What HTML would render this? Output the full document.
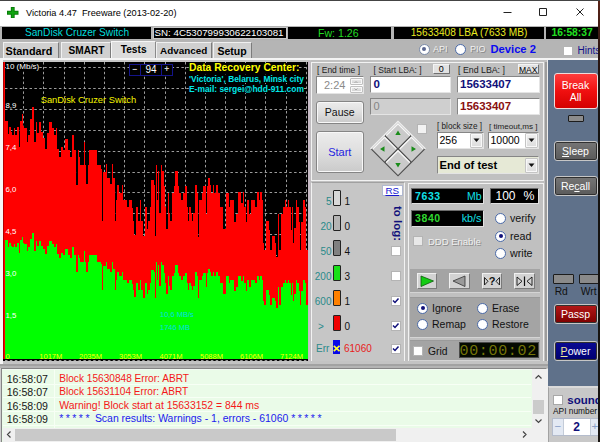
<!DOCTYPE html>
<html>
<head>
<meta charset="utf-8">
<title>Victoria 4.47</title>
<style>
html,body{margin:0;padding:0;}
body{width:600px;height:442px;overflow:hidden;position:relative;background:#bdbdbd;font-family:"Liberation Sans",sans-serif;font-size:10px;color:#000;}
.a{position:absolute;white-space:nowrap;box-sizing:border-box;}
.t{position:absolute;white-space:pre;line-height:1;}
.blk{background:#000;}
.pnl{position:absolute;box-sizing:border-box;background:#c0c0c0;border:1.200px solid #f2f2f2;}
.btn{position:absolute;background:linear-gradient(#ececec,#e0e0e0 45%,#cacaca);border:1px solid #858585;border-radius:2px;box-sizing:border-box;text-align:center;box-shadow:inset 0 0 0 1px #f8f8f8;}
.fld{position:absolute;background:#fff;box-sizing:border-box;border:1px solid #868686;border-right-color:#e4e4e4;border-bottom-color:#e4e4e4;}
.cb{position:absolute;box-sizing:border-box;width:10px;height:10px;background:#fff;border:1px solid #b4b4b4;}
.rad{position:absolute;width:11px;height:11px;border-radius:50%;background:#fff;border:1px solid #4a6aa8;box-sizing:border-box;}
.rad.on::after{content:"";position:absolute;left:2.5px;top:2.500px;width:4px;height:4px;border-radius:50%;background:#10107a;}
.sbtn{position:absolute;box-sizing:border-box;border:1px solid #c6c6c6;border-radius:3px;box-shadow:inset 0 0 0 1px #303030;text-align:center;color:#fff;font-size:11px;line-height:1;}
.rad.dis::after{background:#5a6690;}
.emb{color:#f4f4f4;text-shadow:1px 1px 0 #8a8a8a;}
u{text-decoration:underline;}
</style>
</head>
<body>

<div class="a" style="left:0px;top:0px;width:600px;height:26px;background:#fff;"></div>
<div class="a" style="left:0px;top:0px;width:600px;height:1px;background:#444;"></div>
<svg class="a" style="left:7px;top:6.500px" width="11.500" height="11.500" viewBox="0 0 12 12"><path d="M4 0h4v4h4v4h-4v4h-4v-4h-4v-4h4z" fill="#087c08"/><path d="M5 1h2v4h4v2h-4v4h-2v-4h-4v-2h4z" fill="#10a410"/></svg>
<div class="t" style="left:26px;top:8.8px;font-size:9.2px;color:#000;">Victoria 4.47  Freeware (2013-02-20)</div>
<svg class="a" style="left:500.5px;top:5.200px" width="92" height="16" viewBox="0 0 92 16"><path d="M2.500 7.500h8M38.500 3.500h7v7h-7zM75.500 3.500l7 7M82.500 3.500l-7 7" stroke="#222" stroke-width="1" fill="none"/></svg>
<div class="a" style="left:0px;top:25.5px;width:600px;height:15.5px;background:#b4b4b4;"></div>
<div class="a" style="left:2px;top:26.6px;width:149px;height:12.5px;background:#000;"></div>
<div class="a" style="left:153px;top:26.6px;width:133.5px;height:12.5px;background:#000;"></div>
<div class="a" style="left:288px;top:26.6px;width:103px;height:12.5px;background:#000;"></div>
<div class="a" style="left:394px;top:26.6px;width:150px;height:12.5px;background:#000;"></div>
<div class="a" style="left:546px;top:26.6px;width:52px;height:12.5px;background:#000;"></div>
<div class="t" style="left:2px;top:28.4px;font-size:10.2px;color:#00dcdc;width:150px;text-align:center;">SanDisk Cruzer Switch</div>
<div class="a" style="left:153px;top:26.6px;width:133.5px;height:12.5px;border:1px solid #c8c8c8;"></div>
<div class="t" style="left:154.5px;top:28.4px;font-size:9.75px;color:#fff;">SN: 4C530799930622103081</div>
<div class="t" style="left:318px;top:28.4px;font-size:10.6px;color:#22dd22;">Fw: 1.26</div>
<div class="t" style="left:394px;top:28.4px;font-size:10.15px;color:#eaea20;width:150px;text-align:center;">15633408 LBA (7633 MB)</div>
<div class="t" style="left:551.5px;top:28.4px;font-size:10.3px;color:#20e020;font-weight:bold;">16:58:37</div>
<div class="a" style="left:0px;top:41px;width:600px;height:18px;background:#b5b5b5;"></div>
<div class="a" style="left:3px;top:42px;width:56px;height:16px;background:#d0d0d0;border:1px solid #f0f0f0;border-bottom:none;border-right:1.500px solid #7c7c7c;"></div>
<div class="t" style="left:5.5px;top:46px;font-size:10.8px;color:#000;font-weight:bold;">Standard</div>
<div class="a" style="left:61px;top:42px;width:49.5px;height:16px;background:#d0d0d0;border:1px solid #f0f0f0;border-bottom:none;border-right:1.500px solid #7c7c7c;"></div>
<div class="t" style="left:68.5px;top:46px;font-size:10.1px;color:#000;font-weight:bold;">SMART</div>
<div class="a" style="left:111px;top:40.8px;width:44.5px;height:17.5px;background:#dcdcdc;border:1px solid #f6f6f6;border-bottom:none;border-right-color:#8a8a8a;"></div>
<div class="t" style="left:120.7px;top:44.6px;font-size:10.2px;color:#000;font-weight:bold;">Tests</div>
<div class="a" style="left:156px;top:42px;width:55.5px;height:16px;background:#d0d0d0;border:1px solid #f0f0f0;border-bottom:none;border-right:1.500px solid #7c7c7c;"></div>
<div class="t" style="left:160px;top:46px;font-size:9.9px;color:#000;font-weight:bold;">Advanced</div>
<div class="a" style="left:213px;top:42px;width:38.5px;height:16px;background:#d0d0d0;border:1px solid #f0f0f0;border-bottom:none;border-right:1.500px solid #7c7c7c;"></div>
<div class="t" style="left:217.5px;top:46px;font-size:10.5px;color:#000;font-weight:bold;">Setup</div>
<div class="rad on dis" style="left:418.5px;top:43.500px;border-color:#7a8aa8;"></div>
<div class="t emb" style="left:433px;top:45px;font-size:9px;color:#f0f0f0;">API</div>
<div class="rad" style="left:454.5px;top:43.500px;"></div>
<div class="t emb" style="left:470px;top:45px;font-size:9px;color:#f0f0f0;">PIO</div>
<div class="t" style="left:490.5px;top:43.5px;font-size:11.2px;color:#0a0af0;font-weight:bold;">Device 2</div>
<div class="cb" style="left:563px;top:45.500px;"></div>
<div class="t" style="left:577.5px;top:46px;font-size:10px;color:#10108a;">Hints</div>
<div class="a" style="left:0px;top:57.8px;width:598px;height:1.8px;background:#f4f4f4;"></div>
<div class="a" style="left:0px;top:59.6px;width:598px;height:2.4px;background:#c6c6c6;"></div>
<div class="a" style="left:2.6px;top:61.5px;width:305.5px;height:299.1px;background:#000;"></div>
<svg class="a" style="left:0;top:0" width="600" height="442" viewBox="0 0 600 442"><path d="M23.5 62V359M43.5 62V359M64.5 62V359M84.5 62V359M104.5 62V359M124.5 62V359M144.5 62V359M165.5 62V359M185.5 62V359M205.5 62V359M225.5 62V359M245.5 62V359M265.5 62V359M286.5 62V359M306.5 62V359M5 67.5H308M5 88.5H308M5 109.5H308M5 130.5H308M5 151.5H308M5 172.5H308M5 192.5H308M5 213.5H308M5 234.5H308M5 255.5H308M5 276.5H308M5 297.5H308M5 318.5H308M5 339.5H308M5 360.5H308" stroke="#9c9c9c" stroke-width="1" stroke-dasharray="2.500 2.400" fill="none"/><path d="M5 358.6V121H8V134H9V127H11V132H12V135H14V128H15V135H17V127H19V147H20V121H22V114H23V126H24V128H27V142H28V135H30V119H32V107H34V142H36V122H37V133H39V122H41V132H43V138H45V149H47V133H49V122H52V128H54V135H56V128H57V149H59V157H61V147H63V150H65V139H68V150H70V157H72V135H74V150H76V185H78V150H79V157H80V165H84V142H85V165H86V184H88V165H89V150H97V165H101V169H102V221H103V172H106V164H107V178H110V184H112V164H113V178H115V221H116V200H117V185H119V193H122V185H123V200H127V207H129V200H132V208H133V221H134V235H136V207H138V221H140V200H141V221H143V236H145V207H147V229H148V221H150V207H151V180H154V185H155V236H156V165H157V200H158V171H159V213H161V165H162V171H164V186H165V207H166V229H168V193H169V213H170V221H172V193H174V186H175V171H178V186H179V193H181V200H183V193H185V186H187V207H188V221H189V207H191V213H192V221H193V213H195V185H197V193H198V237H199V200H202V193H203V186H206V214H207V186H208V178H210V185H211V193H213V185H214V193H216V185H218V193H220V207H223V229H226V193H229V207H230V200H234V222H236V214H238V192H241V203H243V192H244V207H246V222H247V200H249V214H251V200H255V207H257V192H259V200H260V192H262V200H263V243H264V250H266V221H269V230H270V250H272V236H275V243H276V257H278V214H279V250H281V214H283V207H285V200H286V207H288V200H289V207H291V230H292V207H293V243H294V228H296V200H297V207H299V222H300V250H301V222H303V200H305V207H306V250H308V358.6Z" fill="#ff0000" shape-rendering="crispEdges"/><path d="M5 358.6V240H8V246.5H9V243H11V245.5H12V247H14V243.5H15V247H17V243H19V253H20V240H22V236.5H23V242.5H24V243.5H27V250.5H28V247H30V239H32V233H34V250.5H36V240.5H37V246H39V240.5H41V245.5H43V248.5H45V254H47V246H49V240.5H52V243.5H54V247H56V243.5H57V254H59V258H61V253H63V254.5H65V249H68V254.5H70V258H72V247H74V254.5H76V272H78V254.5H79V258H80V262H84V250.5H85V262H86V271.5H88V262H89V254.5H97V262H101V264H102V290H103V265.5H106V261.5H107V268.5H110V271.5H112V261.5H113V268.5H115V290H116V279.5H117V272H119V276H122V272H123V279.5H127V283H129V279.5H132V283.5H133V290H134V297H136V283H138V290H140V279.5H141V290H143V297.5H145V283H147V294H148V290H150V283H151V269.5H154V272H155V297.5H156V262H157V279.5H158V265H159V286H161V262H162V265H164V272.5H165V283H166V294H168V276H169V286H170V290H172V276H174V272.5H175V265H178V272.5H179V276H181V279.5H183V276H185V272.5H187V283H188V290H189V283H191V286H192V290H193V286H195V272H197V276H198V298H199V279.5H202V276H203V272.5H206V286.5H207V272.5H208V268.5H210V272H211V276H213V272H214V276H216V272H218V276H220V283H223V294H226V276H229V283H230V279.5H234V290.5H236V286.5H238V275.5H241V281H243V275.5H244V283H246V290.5H247V279.5H249V286.5H251V279.5H255V283H257V275.5H259V279.5H260V275.5H262V279.5H263V301H264V304.5H266V290H269V294.5H270V304.5H272V297.5H275V301H276V308H278V286.5H279V304.5H281V286.5H283V283H285V279.5H286V283H288V279.5H289V283H291V294.5H292V283H293V301H294V293.5H296V279.5H297V283H299V290.5H300V304.5H301V290.5H303V279.5H305V283H306V304.5H308V358.6Z" fill="#00ff00" shape-rendering="crispEdges"/><path d="M4.150 62V359" stroke="#ff0000" stroke-width="1.700"/></svg>
<div class="t" style="left:5.5px;top:62.5px;font-size:8px;color:#fff;background:#000;">10 (Mb/s)</div>
<div class="t" style="left:5.5px;top:102px;font-size:7.8px;color:#fff;">8,9</div>
<div class="t" style="left:5.5px;top:143.9px;font-size:7.8px;color:#fff;">7,4</div>
<div class="t" style="left:5.5px;top:185.8px;font-size:7.8px;color:#fff;">6,0</div>
<div class="t" style="left:5.5px;top:227.7px;font-size:7.8px;color:#fff;">4,5</div>
<div class="t" style="left:5.5px;top:269.6px;font-size:7.8px;color:#fff;">3,0</div>
<div class="t" style="left:5.5px;top:311.5px;font-size:7.8px;color:#fff;">1,5</div>
<div class="t" style="left:5.6px;top:353px;font-size:7.5px;color:#ffff00;">0</div>
<div class="t" style="left:39.3px;top:353px;font-size:7.5px;color:#ffff00;">1017M</div>
<div class="t" style="left:79px;top:353px;font-size:7.5px;color:#ffff00;">2035M</div>
<div class="t" style="left:119px;top:353px;font-size:7.5px;color:#ffff00;">3053M</div>
<div class="t" style="left:159.5px;top:353px;font-size:7.5px;color:#ffff00;">4071M</div>
<div class="t" style="left:200px;top:353px;font-size:7.5px;color:#ffff00;">5088M</div>
<div class="t" style="left:240px;top:353px;font-size:7.5px;color:#ffff00;">6106M</div>
<div class="t" style="left:280px;top:353px;font-size:7.5px;color:#ffff00;">7124M</div>
<div class="t" style="left:40.7px;top:95.5px;font-size:9.35px;color:#f6f600;">SanDisk Cruzer Switch</div>
<div class="a" style="left:129px;top:63.5px;width:43.5px;height:12.2px;border:1px solid #14148a;background:#000;"></div>
<div class="a" style="left:140.3px;top:63.5px;width:1px;height:12.2px;background:#14148a;"></div>
<div class="a" style="left:160.8px;top:63.5px;width:1px;height:12.2px;background:#14148a;"></div>
<div class="t" style="left:132.5px;top:65px;font-size:8.5px;color:#d0d0d0;font-weight:bold;">−</div>
<div class="t" style="left:145.5px;top:64.8px;font-size:10px;color:#fff;">94</div>
<div class="t" style="left:164.2px;top:65px;font-size:8.5px;color:#d0d0d0;font-weight:bold;">+</div>
<div class="t" style="left:189px;top:63.3px;font-size:10.3px;color:#ffff00;font-weight:bold;background:#000;">Data Recovery Center:</div>
<div class="t" style="left:189px;top:74.7px;font-size:8.37px;color:#00e8e8;font-weight:bold;background:#000;">'Victoria', Belarus, Minsk city</div>
<div class="t" style="left:189px;top:84.6px;font-size:8.43px;color:#00e8e8;font-weight:bold;background:#000;">E-mail: sergei@hdd-911.com</div>
<div class="t" style="left:160px;top:311px;font-size:7.5px;color:#00e0e0;">10,6 MB/s</div>
<div class="t" style="left:160px;top:324px;font-size:7.5px;color:#00e0e0;">1746 MB</div>
<div class="a" style="left:308.1px;top:60.6px;width:2.6px;height:301px;background:linear-gradient(90deg,#c8b4c4,#c8c0c8 50%,#bcbcbc);"></div>
<div class="a" style="left:310.5px;top:59.5px;width:237.5px;height:303px;background:#c0c0c0;"></div>
<div class="a" style="left:544.7px;top:62px;width:2.2px;height:300px;background:#9c9c9c;"></div>
<div class="a" style="left:547px;top:59.5px;width:1px;height:327px;background:#ececec;"></div>
<div class="pnl" style="left:310.75px;top:62px;width:233.500px;height:119.250px;"></div>
<div class="t" style="left:317px;top:65.8px;font-size:8.5px;color:#222;">[ End time ]</div>
<div class="t" style="left:373.5px;top:65.8px;font-size:8.5px;color:#222;">[ Start LBA: ]</div>
<div class="t" style="left:458px;top:65.8px;font-size:8.8px;color:#222;">[ End LBA: ]</div>
<div class="btn" style="left:432.500px;top:64.300px;width:17.500px;height:10px;border-radius:1px;border-color:#f4f4f4 #707070 #707070 #f4f4f4;background:#e2e2e2;box-shadow:none;"></div>
<div class="t" style="left:432.5px;top:65.3px;font-size:9px;color:#000;width:17.5px;text-align:center;">0</div>
<div class="btn" style="left:517.700px;top:64.300px;width:21px;height:10px;border-radius:1px;border-color:#f4f4f4 #707070 #707070 #f4f4f4;background:#e2e2e2;box-shadow:none;"></div>
<div class="t" style="left:517.7px;top:65.5px;font-size:8.6px;color:#000;width:21px;text-align:center;">MAX</div>
<div class="fld" style="left:315.700px;top:76.200px;width:48px;height:17.500px;"></div>
<div class="t" style="left:324px;top:80px;font-size:11px;color:#8a8a8a;">2:24</div>
<div class="btn" style="left:349.5px;top:77.700px;width:13px;height:7.300px;border-radius:1px;border-color:#c0c0c0;"></div>
<div class="btn" style="left:349.5px;top:85.700px;width:13px;height:7.300px;border-radius:1px;border-color:#c0c0c0;"></div>
<svg class="a" style="left:353px;top:80px" width="6" height="12" viewBox="0 0 6 12"><path d="M1.500 3L3 1.500L4.500 3M1.500 8.500L3 10L4.500 8.500" stroke="#999" stroke-width="0.800" fill="none"/></svg>
<div class="fld" style="left:370px;top:76.200px;width:80.500px;height:17.300px;"></div>
<div class="t" style="left:373.5px;top:78.8px;font-size:11.5px;color:#10107a;font-weight:bold;">0</div>
<div class="fld" style="left:456.5px;top:76.200px;width:83px;height:17.300px;"></div>
<div class="t" style="left:460px;top:78.8px;font-size:11.5px;color:#10107a;font-weight:bold;">15633407</div>
<div class="btn" style="left:315.700px;top:101.200px;width:48px;height:22.500px;border-radius:3px;"></div>
<div class="t" style="left:316px;top:107px;font-size:10.5px;color:#111;width:47.5px;text-align:center;">Pause</div>
<div class="fld" style="left:370px;top:98.300px;width:80.500px;height:17px;background:#cfcfcf;"></div>
<div class="t" style="left:373.5px;top:101.2px;font-size:11px;color:#858585;">0</div>
<div class="fld" style="left:456.5px;top:98.300px;width:83px;height:17px;"></div>
<div class="t" style="left:460px;top:101px;font-size:11.5px;color:#8a1010;font-weight:bold;">15633407</div>
<div class="btn" style="left:315.700px;top:130.500px;width:48px;height:42.800px;border-radius:3px;"></div>
<div class="t" style="left:316px;top:146.5px;font-size:11px;color:#2424e0;width:47.5px;text-align:center;">Start</div>
<svg class="a" style="left:368px;top:119px" width="60" height="60" viewBox="0 0 60 60">
<path d="M30 2.5L57.5 30L30 57.5L2.5 30Z" fill="#4c4c4c"/>
<path d="M2.500 30L30 2.500L57.500 30" fill="none" stroke="#f4f4f4" stroke-width="1.400"/>
<path d="M30 4.1L42.4 16.5L30 28.9L17.6 16.5Z" fill="#cacaca"/>
<path d="M18.2 16.5L30 4.699999999999999L41.8 16.5" fill="none" stroke="#f8f8f8" stroke-width="1.300"/>
<path d="M30 31.1L42.4 43.5L30 55.9L17.6 43.5Z" fill="#cacaca"/>
<path d="M18.2 43.5L30 31.7L41.8 43.5" fill="none" stroke="#f8f8f8" stroke-width="1.300"/>
<path d="M16.5 17.6L28.9 30L16.5 42.4L4.1 30Z" fill="#cacaca"/>
<path d="M4.699999999999999 30L16.5 18.2L28.3 30" fill="none" stroke="#f8f8f8" stroke-width="1.300"/>
<path d="M43.5 17.6L55.9 30L43.5 42.4L31.1 30Z" fill="#cacaca"/>
<path d="M31.7 30L43.5 18.2L55.3 30" fill="none" stroke="#f8f8f8" stroke-width="1.300"/>
<path d="M30 11.500l2.700 4.500h-5.400zM30 48.500l2.700-4.500h-5.400zM12 30l4.500-2.700v5.400zM48 30l-4.500-2.700v5.400z" fill="#1a8c1a"/>
</svg>
<div class="cb" style="left:417px;top:124px;background:#f2f2f2;"></div>
<div class="t" style="left:437px;top:122.5px;font-size:8.2px;color:#222;">[ block size ]</div>
<div class="t" style="left:489px;top:122.5px;font-size:8.1px;color:#222;">[ timeout,ms ]</div>
<div class="fld" style="left:436.5px;top:131.7px;width:47px;height:17.5px;background:#fff;"></div>
<div class="btn" style="left:470.0px;top:133.2px;width:12.500px;height:14.5px;border-radius:1px;border-color:#c4c4c4;background:linear-gradient(#f0f0f0,#dcdcdc);"></div>
<svg class="a" style="left:473.0px;top:138.45px" width="7" height="5" viewBox="0 0 7 5"><path d="M0.500 0.500h6l-3 3.500z" fill="#111"/></svg>
<div class="t" style="left:439.5px;top:134.7px;font-size:10.5px;color:#000;">256</div>
<div class="fld" style="left:487.5px;top:131.7px;width:51px;height:17.5px;background:#fff;"></div>
<div class="btn" style="left:525.0px;top:133.2px;width:12.500px;height:14.5px;border-radius:1px;border-color:#c4c4c4;background:linear-gradient(#f0f0f0,#dcdcdc);"></div>
<svg class="a" style="left:528.0px;top:138.45px" width="7" height="5" viewBox="0 0 7 5"><path d="M0.500 0.500h6l-3 3.500z" fill="#111"/></svg>
<div class="t" style="left:490.5px;top:134.7px;font-size:10.5px;color:#000;">10000</div>
<div class="fld" style="left:436.5px;top:156px;width:102px;height:18px;background:#e6e9d6;"></div>
<div class="btn" style="left:525.0px;top:157.5px;width:12.500px;height:15px;border-radius:1px;border-color:#c4c4c4;background:linear-gradient(#f0f0f0,#dcdcdc);"></div>
<svg class="a" style="left:528.0px;top:163.0px" width="7" height="5" viewBox="0 0 7 5"><path d="M0.500 0.500h6l-3 3.500z" fill="#111"/></svg>
<div class="t" style="left:439.5px;top:159.5px;font-size:11.2px;color:#000;font-weight:bold;">End of test</div>
<div class="pnl" style="left:310.75px;top:181.500px;width:94.250px;height:180.500px;border-top-color:#a0a0a0;background:#c6c6c6;"></div>
<div class="a" style="left:381.5px;top:185px;width:21.500px;height:10.500px;background:#fff;border:1px solid #b0b8d0;"></div>
<div class="t" style="left:381.5px;top:185.8px;font-size:9.8px;color:#1818d0;width:21.5px;text-align:center;"><u>RS</u></div>
<div class="a" style="left:333px;top:190px;width:8px;height:16px;background:#d8d8d8;border:1px solid #222;border-radius:1px;"></div>
<div class="t" style="left:311px;top:196.5px;font-size:10px;color:#2a8a8a;width:20.5px;text-align:right;">5</div>
<div class="t" style="left:344.5px;top:196.5px;font-size:10px;color:#111;">1</div>
<div class="a" style="left:333px;top:215px;width:8px;height:16px;background:#b4b4b4;border:1px solid #222;border-radius:1px;"></div>
<div class="t" style="left:311px;top:221.5px;font-size:10px;color:#2a8a8a;width:20.5px;text-align:right;">20</div>
<div class="t" style="left:344.5px;top:221.5px;font-size:10px;color:#111;">0</div>
<div class="a" style="left:333px;top:240px;width:8px;height:16px;background:#808080;border:1px solid #222;border-radius:1px;"></div>
<div class="t" style="left:311px;top:246.5px;font-size:10px;color:#2a8a8a;width:20.5px;text-align:right;">50</div>
<div class="t" style="left:344.5px;top:246.5px;font-size:10px;color:#111;">4</div>
<div class="a" style="left:333px;top:265px;width:8px;height:16px;background:#18e018;border:1px solid #222;border-radius:1px;"></div>
<div class="t" style="left:311px;top:271.5px;font-size:10px;color:#2a8a8a;width:20.5px;text-align:right;">200</div>
<div class="t" style="left:344.5px;top:271.5px;font-size:10px;color:#111;">3</div>
<div class="a" style="left:333px;top:290px;width:8px;height:16px;background:#ff8000;border:1px solid #222;border-radius:1px;"></div>
<div class="t" style="left:311px;top:296.5px;font-size:10px;color:#2a8a8a;width:20.5px;text-align:right;">600</div>
<div class="t" style="left:344.5px;top:296.5px;font-size:10px;color:#111;">1</div>
<div class="a" style="left:333px;top:315px;width:8px;height:16px;background:#f00000;border:1px solid #222;border-radius:1px;"></div>
<div class="t" style="left:318px;top:321.5px;font-size:10px;color:#2a8a8a;">&gt;</div>
<div class="t" style="left:344.5px;top:321.5px;font-size:10px;color:#111;">0</div>
<div class="a" style="left:332.500px;top:339.500px;width:7.300px;height:14.500px;background:#0808e8;"></div>
<svg class="a" style="left:332.500px;top:344.500px" width="7.300" height="7" viewBox="0 0 7.300 7"><path d="M0.800 0.800L6.500 6.200M6.500 0.800L0.800 6.200" stroke="#ffff30" stroke-width="1.700"/></svg>
<div class="t" style="left:316px;top:344.3px;font-size:10px;color:#2a8a8a;">Err</div>
<div class="t" style="left:344px;top:344.3px;font-size:10px;color:#e82020;">61060</div>
<div class="cb" style="left:391px;top:246.3px;"></div>
<div class="cb" style="left:391px;top:270.5px;"></div>
<div class="cb" style="left:391px;top:295.5px;"></div>
<svg class="a" style="left:392.3px;top:296.8px" width="8" height="8" viewBox="0 0 8 8"><path d="M1 3.500L3 5.500L6.500 1.500" stroke="#10107a" stroke-width="1.500" fill="none"/></svg>
<div class="cb" style="left:391px;top:320.8px;"></div>
<svg class="a" style="left:392.3px;top:322.1px" width="8" height="8" viewBox="0 0 8 8"><path d="M1 3.500L3 5.500L6.500 1.500" stroke="#10107a" stroke-width="1.500" fill="none"/></svg>
<div class="cb" style="left:391px;top:344px;"></div>
<svg class="a" style="left:392.3px;top:345.3px" width="8" height="8" viewBox="0 0 8 8"><path d="M1 3.500L3 5.500L6.500 1.500" stroke="#10107a" stroke-width="1.500" fill="none"/></svg>
<div class="t" style="left:391px;top:206px;font-size:11.500px;font-weight:bold;color:#10107a;transform-origin:0 0;transform:rotate(90deg) translate(0,-100%);">to log:</div>
<div class="pnl" style="left:408px;top:183px;width:136.250px;height:179.250px;"></div>
<div class="a" style="left:411px;top:188px;width:72.5px;height:15.5px;background:#000;border:1px solid #6a6a6a;border-right-color:#e0e0e0;border-bottom-color:#e0e0e0;"></div>
<div class="t" style="left:415px;top:190.5px;font-size:10.5px;color:#10e0e8;font-weight:bold;letter-spacing:0.600px;">7633</div>
<div class="t" style="left:411px;top:190.5px;font-size:10.5px;color:#10e0e8;width:70.5px;text-align:right;">Mb</div>
<div class="a" style="left:490px;top:188px;width:48.5px;height:15.5px;background:#000;border:1px solid #6a6a6a;border-right-color:#e0e0e0;border-bottom-color:#e0e0e0;"></div>
<div class="t" style="left:495.5px;top:189.5px;font-size:12px;color:#fff;">100</div>
<div class="t" style="left:523.5px;top:189.5px;font-size:12.3px;color:#fff;">%</div>
<div class="a" style="left:411px;top:210.3px;width:72.5px;height:16.3px;background:#000;border:1px solid #6a6a6a;border-right-color:#e0e0e0;border-bottom-color:#e0e0e0;"></div>
<div class="t" style="left:415px;top:212.8px;font-size:10.5px;color:#30d830;font-weight:bold;letter-spacing:0.600px;">3840</div>
<div class="t" style="left:411px;top:212.5px;font-size:10.8px;color:#10e0e8;width:70.5px;text-align:right;">kb/s</div>
<div class="rad" style="left:495px;top:212.5px;"></div>
<div class="t" style="left:510px;top:212.5px;font-size:10.7px;color:#111;">verify</div>
<div class="rad on" style="left:495px;top:230.5px;"></div>
<div class="t" style="left:510px;top:230.5px;font-size:10.7px;color:#111;">read</div>
<div class="rad" style="left:495px;top:248.2px;"></div>
<div class="t" style="left:510px;top:248.2px;font-size:10.7px;color:#111;">write</div>
<div class="cb" style="left:413px;top:236px;background:#e8e8e8;"></div>
<div class="t emb" style="left:428px;top:236.5px;font-size:9.5px;color:#f0f0f0;">DDD Enable</div>
<div class="a" style="left:410px;top:268.5px;width:129.5px;height:24px;background:#a4a4a4;border-bottom:1px solid #d4d4d4;"></div>
<div class="a" style="left:416.5px;top:272.500px;width:20.5px;height:16.500px;background:#d3d3d3;border:1px solid #f0f0f0;border-right-color:#7a7a7a;border-bottom-color:#7a7a7a;"></div>
<svg class="a" style="left:416.5px;top:272.500px" width="20.5" height="16.500" viewBox="0 0 20.5 16.500"><path d="M4 3L16.500 8L4 13.500Z" fill="#14cc14" stroke="#0a5a0a" stroke-width="0.800"/></svg>
<div class="a" style="left:449px;top:272.500px;width:20.5px;height:16.500px;background:#d3d3d3;border:1px solid #f0f0f0;border-right-color:#7a7a7a;border-bottom-color:#7a7a7a;"></div>
<svg class="a" style="left:449px;top:272.500px" width="20.5" height="16.500" viewBox="0 0 20.5 16.500"><path d="M16 3L4 8L16 13.500Z" fill="#9a9a9a" stroke="#333" stroke-width="0.800"/></svg>
<div class="a" style="left:482px;top:272.500px;width:20px;height:16.500px;background:#d3d3d3;border:1px solid #f0f0f0;border-right-color:#7a7a7a;border-bottom-color:#7a7a7a;"></div>
<svg class="a" style="left:482px;top:272.500px" width="20" height="16.500" viewBox="0 0 20 16.500"><path d="M2.500 4.500L6 8.250L2.500 12Z M17.500 4.500L14 8.250L17.500 12Z" fill="none" stroke="#111" stroke-width="0.900"/><text x="10" y="12.300" font-size="11" font-weight="bold" text-anchor="middle" font-family="Liberation Sans, sans-serif" fill="#111">?</text></svg>
<div class="a" style="left:514px;top:272.500px;width:21px;height:16.500px;background:#d3d3d3;border:1px solid #f0f0f0;border-right-color:#7a7a7a;border-bottom-color:#7a7a7a;"></div>
<svg class="a" style="left:514px;top:272.500px" width="21" height="16.500" viewBox="0 0 21 16.500"><path d="M3 4L8 8.250L3 12.500Z M18 4L13 8.250L18 12.500Z" fill="none" stroke="#111" stroke-width="0.900"/><path d="M10.500 3.500V13" stroke="#111" stroke-width="1.200"/></svg>
<div class="a" style="left:410px;top:296.5px;width:129.5px;height:41px;background:#a4a4a4;border-top:1px solid #9a9a9a;border-bottom:1px solid #d4d4d4;"></div>
<div class="rad on" style="left:417px;top:302.8px;"></div>
<div class="t" style="left:432px;top:302.8px;font-size:10.5px;color:#111;">Ignore</div>
<div class="rad" style="left:477px;top:302.8px;"></div>
<div class="t" style="left:492px;top:302.8px;font-size:10.5px;color:#111;">Erase</div>
<div class="rad" style="left:417px;top:319.0px;"></div>
<div class="t" style="left:432px;top:319.0px;font-size:10.5px;color:#111;">Remap</div>
<div class="rad" style="left:477px;top:319.0px;"></div>
<div class="t" style="left:492px;top:319.0px;font-size:10.5px;color:#111;">Restore</div>
<div class="a" style="left:410px;top:340px;width:129.5px;height:20.5px;background:#a4a4a4;border-top:1px solid #9a9a9a;border-bottom:1px solid #d4d4d4;"></div>
<div class="cb" style="left:413px;top:345.500px;"></div>
<div class="t" style="left:428px;top:346.5px;font-size:10.3px;color:#111;">Grid</div>
<div class="a" style="left:459px;top:342px;width:80px;height:16px;background:#050a00;border:1px solid #4a4a4a;"></div>
<div class="t" style="left:459.500px;top:343.700px;font-family:'Liberation Mono',monospace;font-size:15px;color:#747408;letter-spacing:0.670px;">00:00:02</div>
<div class="a" style="left:548px;top:59.6px;width:50px;height:327.4px;background:#5f718a;"></div>
<div class="sbtn" style="left:553.5px;top:73px;width:44px;height:35.500px;background:linear-gradient(#ff3c3c,#f01010 50%,#d40000);border-color:#f0dada;box-shadow:none;border-radius:3px;font-size:10.500px;line-height:12.500px;padding-top:4.500px;">Break<br>All</div>
<div class="a" style="left:567.5px;top:114.5px;width:16.5px;height:7px;background:#8c8c8c;border:1px solid #1c1c1c;border-radius:1px;"></div>
<div class="sbtn" style="left:553.5px;top:140.5px;width:44px;height:20px;background:linear-gradient(#767676,#5a5a5a);font-size:10.5px;padding-top:4.25px;"><u>S</u>leep</div>
<div class="sbtn" style="left:553.5px;top:176px;width:44px;height:19.5px;background:linear-gradient(#767676,#5a5a5a);font-size:10.5px;padding-top:4.0px;">Re<u>c</u>all</div>
<div class="a" style="left:553px;top:274px;width:20.5px;height:10.3px;background:#8a8a8a;border:1px solid #1c1c1c;border-radius:1px;"></div>
<div class="a" style="left:579px;top:274px;width:20.5px;height:10.3px;background:#8a8a8a;border:1px solid #1c1c1c;border-radius:1px;"></div>
<div class="t" style="left:554.7px;top:287px;font-size:10.3px;color:#101010;">Rd</div>
<div class="t" style="left:580.7px;top:287px;font-size:10.3px;color:#101010;">Wrt</div>
<div class="sbtn" style="left:553.5px;top:304px;width:44px;height:19.8px;background:linear-gradient(#b41818,#7c0000);font-size:10.5px;padding-top:4.15px;">Passp</div>
<div class="sbtn" style="left:553.5px;top:341px;width:44px;height:19.5px;background:linear-gradient(#0a0a94,#000070);font-size:10.5px;padding-top:4.0px;"><u style="color:#f0ea98">P</u>ower</div>
<div class="a" style="left:548px;top:386px;width:50px;height:56px;background:#c8c8c8;border-top:2px solid #dadada;border-left:1.500px solid #a2a2a2;"></div>
<div class="cb" style="left:552.500px;top:394.800px;border-color:#a8a8a8;"></div>
<div class="t" style="left:567.3px;top:395px;font-size:11.5px;color:#10107a;font-weight:bold;">sound</div>
<div class="t" style="left:553px;top:406.5px;font-size:8.35px;color:#111;">API number</div>
<div class="a" style="left:552px;top:418px;width:46.5px;height:17.7px;background:#fff;border:1px solid #b4bccc;"></div>
<div class="a" style="left:552.5px;top:418.5px;width:11px;height:16.7px;background:#e3e9f3;border-right:1px solid #c4ccd8;"></div>
<div class="a" style="left:589.7px;top:418.5px;width:9px;height:16.7px;background:#e3e9f3;border-left:1px solid #c4ccd8;"></div>
<div class="t" style="left:554.5px;top:420.5px;font-size:11.5px;color:#8aa0c8;">−</div>
<div class="t" style="left:573.2px;top:420.8px;font-size:12px;color:#10107a;font-weight:bold;">2</div>
<div class="t" style="left:591.5px;top:420.5px;font-size:11.5px;color:#8aa0c8;">+</div>
<div class="a" style="left:0px;top:360.6px;width:548px;height:82px;background:#c3c3c3;"></div>
<div class="a" style="left:0px;top:364.2px;width:548px;height:1.5px;background:#a2a2a2;"></div>
<div class="a" style="left:0px;top:365.7px;width:548px;height:2.4px;background:#b4b4b4;"></div>
<div class="a" style="left:0px;top:368px;width:548px;height:74px;background:#cfcfcf;"></div>
<div class="a" style="left:1px;top:368px;width:546px;height:74px;background:#eafbe8;border:1px solid #858585;border-right-color:#e0e0e0;border-bottom:none;"></div>
<div class="a" style="left:2px;top:369px;width:544px;height:1.2px;background:#f4fbf4;"></div>
<div class="a" style="left:0px;top:60px;width:2.6px;height:303.7px;background:#f6f6f6;"></div>
<div class="a" style="left:2.5px;top:383.7px;width:528.5px;height:1px;background:#f7fff5;"></div>
<div class="a" style="left:2.5px;top:397.3px;width:528.5px;height:1px;background:#f7fff5;"></div>
<div class="a" style="left:2.5px;top:410.9px;width:528.5px;height:1px;background:#f7fff5;"></div>
<div class="a" style="left:2.5px;top:424.5px;width:528.5px;height:1px;background:#f7fff5;"></div>
<div class="a" style="left:54px;top:369px;width:1px;height:59px;background:#f7fff5;"></div>
<div class="t" style="left:6.7px;top:373.6px;font-size:10.6px;color:#161616;">16:58:07</div>
<div class="t" style="left:59.2px;top:373.6px;font-size:10.15px;color:#f41818;">Block 15630848 Error: ABRT</div>
<div class="t" style="left:6.7px;top:387.15000000000003px;font-size:10.6px;color:#161616;">16:58:07</div>
<div class="t" style="left:59.2px;top:387.15000000000003px;font-size:10.15px;color:#f41818;">Block 15631104 Error: ABRT</div>
<div class="t" style="left:6.7px;top:400.70000000000005px;font-size:10.6px;color:#161616;">16:58:09</div>
<div class="t" style="left:59.2px;top:400.70000000000005px;font-size:10.45px;color:#f41818;">Warning! Block start at 15633152 = 844 ms</div>
<div class="t" style="left:6.7px;top:414.25px;font-size:10.6px;color:#161616;">16:58:09</div>
<div class="t" style="left:59.2px;top:414.25px;font-size:10.45px;color:#1a1aee;"><span style="letter-spacing:2.500px">*****</span> Scan results: Warnings - 1, errors - 61060 <span style="letter-spacing:2.500px">*****</span></div>
<div class="a" style="left:531.5px;top:369px;width:16px;height:59px;background:#f0f0f0;"></div>
<div class="a" style="left:532.5px;top:400px;width:11.5px;height:13.7px;background:#cbcbcb;"></div>
<svg class="a" style="left:531px;top:366px" width="15" height="62" viewBox="0 0 15 62"><path d="M4.500 12.500L7.500 9.500L10.500 12.500M4.500 53.500L7.500 56.500L10.500 53.500" stroke="#444" stroke-width="1.200" fill="none"/></svg>
<div class="a" style="left:3px;top:428px;width:528px;height:14px;background:#f0f0f0;"></div>
<div class="a" style="left:531px;top:428px;width:16.5px;height:14px;background:#f0f0f0;"></div>
<div class="a" style="left:15px;top:428.5px;width:381px;height:12px;background:#c9c9c9;"></div>
<svg class="a" style="left:3px;top:428px" width="528" height="14" viewBox="0 0 528 14"><path d="M7.500 3.500L4.500 6.500L7.500 9.500M520 3.500L523 6.500L520 9.500" stroke="#444" stroke-width="1.200" fill="none"/></svg>
<div class="a" style="left:598px;top:1px;width:2px;height:441px;background:linear-gradient(#5a2418,#2a1410 12%,#141210 30%,#181410);"></div>
</body>
</html>
